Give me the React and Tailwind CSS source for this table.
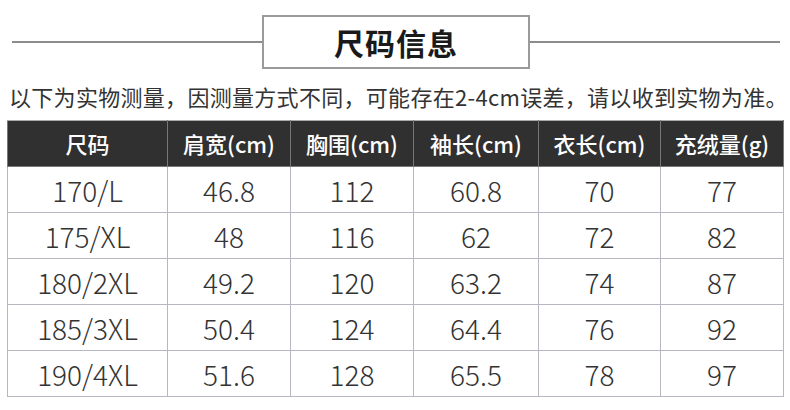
import React from 'react';

const headers = ['尺码', '肩宽(cm)', '胸围(cm)', '袖长(cm)', '衣长(cm)', '充绒量(g)'];

const rows = [
  ['170/L', '46.8', '112', '60.8', '70', '77'],
  ['175/XL', '48', '116', '62', '72', '82'],
  ['180/2XL', '49.2', '120', '63.2', '74', '87'],
  ['185/3XL', '50.4', '124', '64.4', '76', '92'],
  ['190/4XL', '51.6', '128', '65.5', '78', '97'],
];

const colWidths = ['w-[160px]', 'w-[123px]', 'w-[123px]', 'w-[125px]', 'w-[122px]', 'w-[123px]'];

const App = () => {
  return (
    <div className="w-[790px] h-[410px] bg-white overflow-hidden font-['Noto_Sans_CJK_SC',sans-serif] text-[#333]">
      {/* Title */}
      <div className="flex items-center pt-[15px] pl-[12px]">
        <div className="w-[250px] h-[2px] bg-[#8c8c8c]" />
        <div className="w-[268px] h-[54px] border-2 border-[#9a9a9a] flex items-center justify-center">
          <span className="text-[30px] font-bold text-[#1a1a1a] tracking-[1px] leading-none">尺码信息</span>
        </div>
        <div className="w-[250px] h-[2px] bg-[#8c8c8c]" />
      </div>

      {/* Note */}
      <p className="mt-[12px] pl-[9px] text-[22px] leading-[30px] tracking-[0.3px] text-[#333] whitespace-nowrap">
        以下为实物测量，因测量方式不同，可能存在2-4cm误差，请以收到实物为准。
      </p>

      {/* Table */}
      <table className="mt-[9px] ml-[7px] w-[776px] border-collapse table-fixed">
        <thead>
          <tr className="h-[46px] bg-[#303030]">
            {headers.map((h, i) => (
              <th
                key={i}
                className={`${colWidths[i]} border border-[#777] border-t-[#aaa] text-white text-[22px] font-medium text-center p-0`}
              >
                {h}
              </th>
            ))}
          </tr>
        </thead>
        <tbody>
          {rows.map((row, r) => (
            <tr key={r} className="h-[46px]">
              {row.map((cell, i) => (
                <td
                  key={i}
                  className="border border-[#b7b7c2] text-center text-[28px] font-light text-[#333] p-0"
                >
                  {cell}
                </td>
              ))}
            </tr>
          ))}
        </tbody>
      </table>
    </div>
  );
};

export default App;
